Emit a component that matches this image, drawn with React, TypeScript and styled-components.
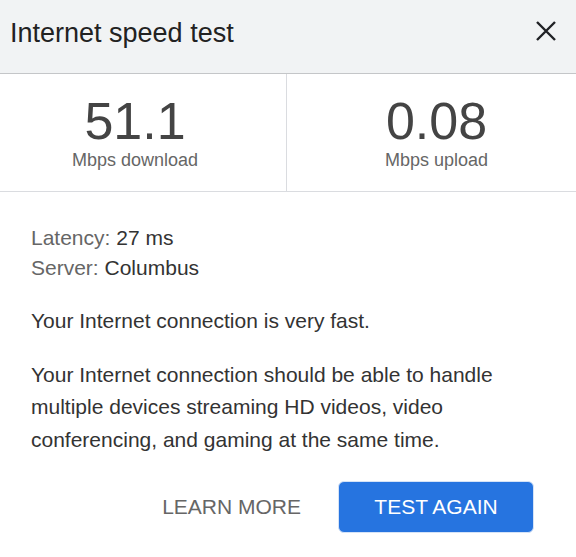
import styled, { createGlobalStyle } from "styled-components";

const GlobalStyle = createGlobalStyle`
  html, body {
    margin: 0;
    padding: 0;
    background: #ffffff;
  }
  body {
    font-family: "Liberation Sans", Arial, sans-serif;
  }
`;

const Panel = styled.div`
  width: 576px;
  height: 557px;
  background: #ffffff;
  display: flex;
  flex-direction: column;
  overflow: hidden;
`;

const Header = styled.div`
  height: 74px;
  background: #f1f3f4;
  border-bottom: 1px solid #c4c6c8;
  display: flex;
  align-items: center;
  justify-content: space-between;
  padding: 0 18px 6px 10px;
  box-sizing: border-box;
`;

const Title = styled.h1`
  margin: 0;
  font-size: 27px;
  font-weight: 400;
  color: #222222;
`;

const CloseButton = styled.button`
  border: none;
  background: none;
  padding: 0;
  width: 24px;
  height: 24px;
  display: flex;
  align-items: center;
  justify-content: center;
  cursor: pointer;
  margin-top: -6px;
`;

const Stats = styled.div`
  display: grid;
  grid-template-columns: 286px 1fr;
  height: 117px;
  border-bottom: 1px solid #dadce0;
`;

type StatProps = {
  $shift: number;
};

const Stat = styled.div<StatProps>`
  display: flex;
  flex-direction: column;
  align-items: center;
  padding-top: 19px;
  padding-left: ${(p) => (p.$shift > 0 ? p.$shift : 0)}px;
  padding-right: ${(p) => (p.$shift < 0 ? -p.$shift : 0)}px;
  & + & {
    border-left: 1px solid #dadce0;
  }
`;

const Value = styled.div`
  font-size: 52px;
  line-height: 56px;
  color: #444444;
`;

const Unit = styled.div`
  font-size: 18px;
  line-height: 22px;
  color: #666666;
`;

const Body = styled.div`
  padding: 31px 31px 0;
  color: #333333;
  font-size: 21px;
`;

const InfoLine = styled.div`
  line-height: 30px;
  & span {
    color: #666666;
  }
`;

type ParagraphProps = {
  $gap: number;
};

const Paragraph = styled.p<ParagraphProps>`
  margin: ${(p) => p.$gap}px 0 0;
  line-height: 32.5px;
  color: #333333;
`;

const Actions = styled.div`
  display: flex;
  justify-content: flex-end;
  align-items: center;
  gap: 37px;
  padding: 25px 42px 0 0;
`;

const TextButton = styled.button`
  border: none;
  background: none;
  font-family: inherit;
  font-size: 21px;
  color: #666666;
  padding: 0;
  cursor: pointer;
`;

const PrimaryButton = styled.button`
  width: 196px;
  height: 52px;
  border: 1px solid #d5e3f7;
  border-radius: 6px;
  background: #2674e0;
  color: #ffffff;
  font-family: inherit;
  font-size: 21px;
  cursor: pointer;
`;

export default function App() {
  return (
    <Panel>
      <GlobalStyle />
      <Header>
        <Title>Internet speed test</Title>
        <CloseButton aria-label="Close">
          <svg width="22" height="22" viewBox="0 0 22 22">
            <path d="M2 2 L20 20 M20 2 L2 20" stroke="#202124" strokeWidth="2.4" />
          </svg>
        </CloseButton>
      </Header>
      <Stats>
        <Stat $shift={-16}>
          <Value>51.1</Value>
          <Unit>Mbps download</Unit>
        </Stat>
        <Stat $shift={10}>
          <Value>0.08</Value>
          <Unit>Mbps upload</Unit>
        </Stat>
      </Stats>
      <Body>
        <InfoLine>
          <span>Latency:</span> 27 ms
        </InfoLine>
        <InfoLine>
          <span>Server:</span> Columbus
        </InfoLine>
        <Paragraph $gap={22}>Your Internet connection is very fast.</Paragraph>
        <Paragraph $gap={21}>
          Your Internet connection should be able to handle multiple devices
          streaming HD videos, video conferencing, and gaming at the same time.
        </Paragraph>
      </Body>
      <Actions>
        <TextButton>LEARN MORE</TextButton>
        <PrimaryButton>TEST AGAIN</PrimaryButton>
      </Actions>
    </Panel>
  );
}
